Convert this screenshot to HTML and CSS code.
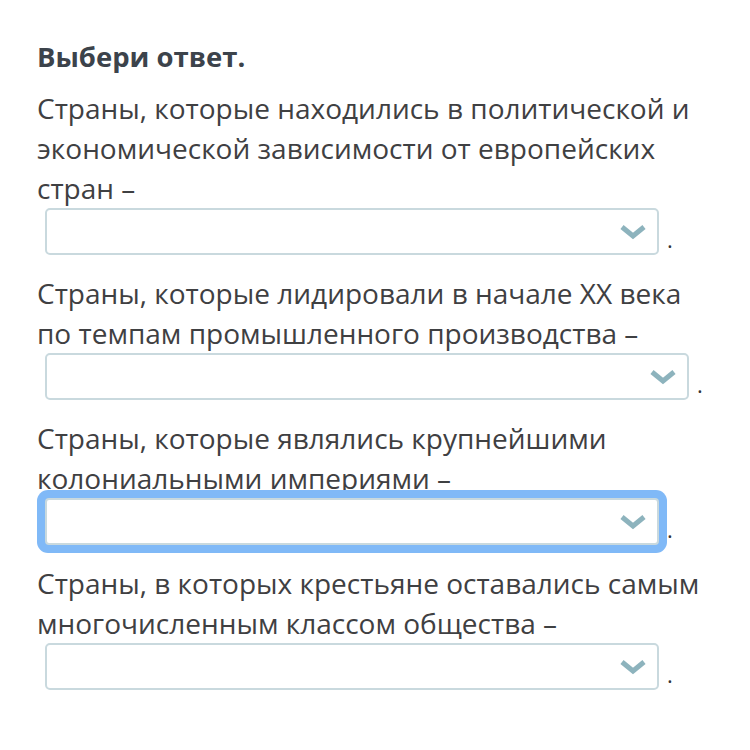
FILE: index.html
```html
<!DOCTYPE html>
<html lang="ru">
<head>
<meta charset="utf-8">
<link rel="stylesheet" href="styles.css">
</head>
<body>
<div class="quiz">
  <h1 class="title">Выбери ответ.</h1>

  <div class="item">
    <p class="text">Страны, которые находились в политической и экономической зависимости от европейских стран –</p>
    <div class="row">
      <div class="select w1"><svg class="chev" viewBox="0 0 28 16"><path d="M3 3 L14 12 L25 3" /></svg></div>
      <span class="dot">.</span>
    </div>
  </div>

  <div class="item">
    <p class="text">Страны, которые лидировали в начале XX века по темпам промышленного производства –</p>
    <div class="row">
      <div class="select w2"><svg class="chev" viewBox="0 0 28 16"><path d="M3 3 L14 12 L25 3" /></svg></div>
      <span class="dot">.</span>
    </div>
  </div>

  <div class="item">
    <p class="text">Страны, которые являлись крупнейшими колониальными империями –</p>
    <div class="row">
      <div class="select w1 focused"><svg class="chev" viewBox="0 0 28 16"><path d="M3 3 L14 12 L25 3" /></svg></div>
      <span class="dot">.</span>
    </div>
  </div>

  <div class="item">
    <p class="text">Страны, в которых крестьяне оставались самым многочисленным классом общества –</p>
    <div class="row">
      <div class="select w1"><svg class="chev" viewBox="0 0 28 16"><path d="M3 3 L14 12 L25 3" /></svg></div>
      <span class="dot">.</span>
    </div>
  </div>
</div>
</body>
</html>
```

FILE: styles.css
```css
html, body {
  margin: 0;
  padding: 0;
  background: #ffffff;
}

body {
  font-family: "Open Sans", "Noto Sans", sans-serif;
}

.quiz {
  padding: 37px 20px 0 37px;
}

.title {
  margin: 0 0 11px 0;
  font-size: 27.5px;
  line-height: 40px;
  font-weight: 700;
  color: #3c434b;
}

.item {
  margin-bottom: 18px;
}

.text {
  margin: 0;
  font-size: 28px;
  line-height: 40px;
  color: #3f4042;
  max-width: 668px;
}

.row {
  display: flex;
  align-items: flex-end;
  padding-left: 8px;
}

.select {
  box-sizing: border-box;
  height: 47px;
  border: 2px solid #c9d9de;
  border-radius: 5px;
  background: #ffffff;
  display: flex;
  align-items: center;
  justify-content: flex-end;
  padding-right: 10px;
}

.w1 { width: 614px; }
.w2 { width: 644px; }

.focused {
  box-shadow: 0 0 0 8px #80b9f7;
  border-radius: 4px;
}

.chev {
  width: 28px;
  height: 16px;
}

.chev path {
  fill: none;
  stroke: #8db3bd;
  stroke-width: 5;
  stroke-linecap: butt;
  stroke-linejoin: miter;
}

.dot {
  font-size: 22px;
  line-height: 22px;
  color: #333;
  margin-left: 8px;
  padding-bottom: 5px;
}
```
